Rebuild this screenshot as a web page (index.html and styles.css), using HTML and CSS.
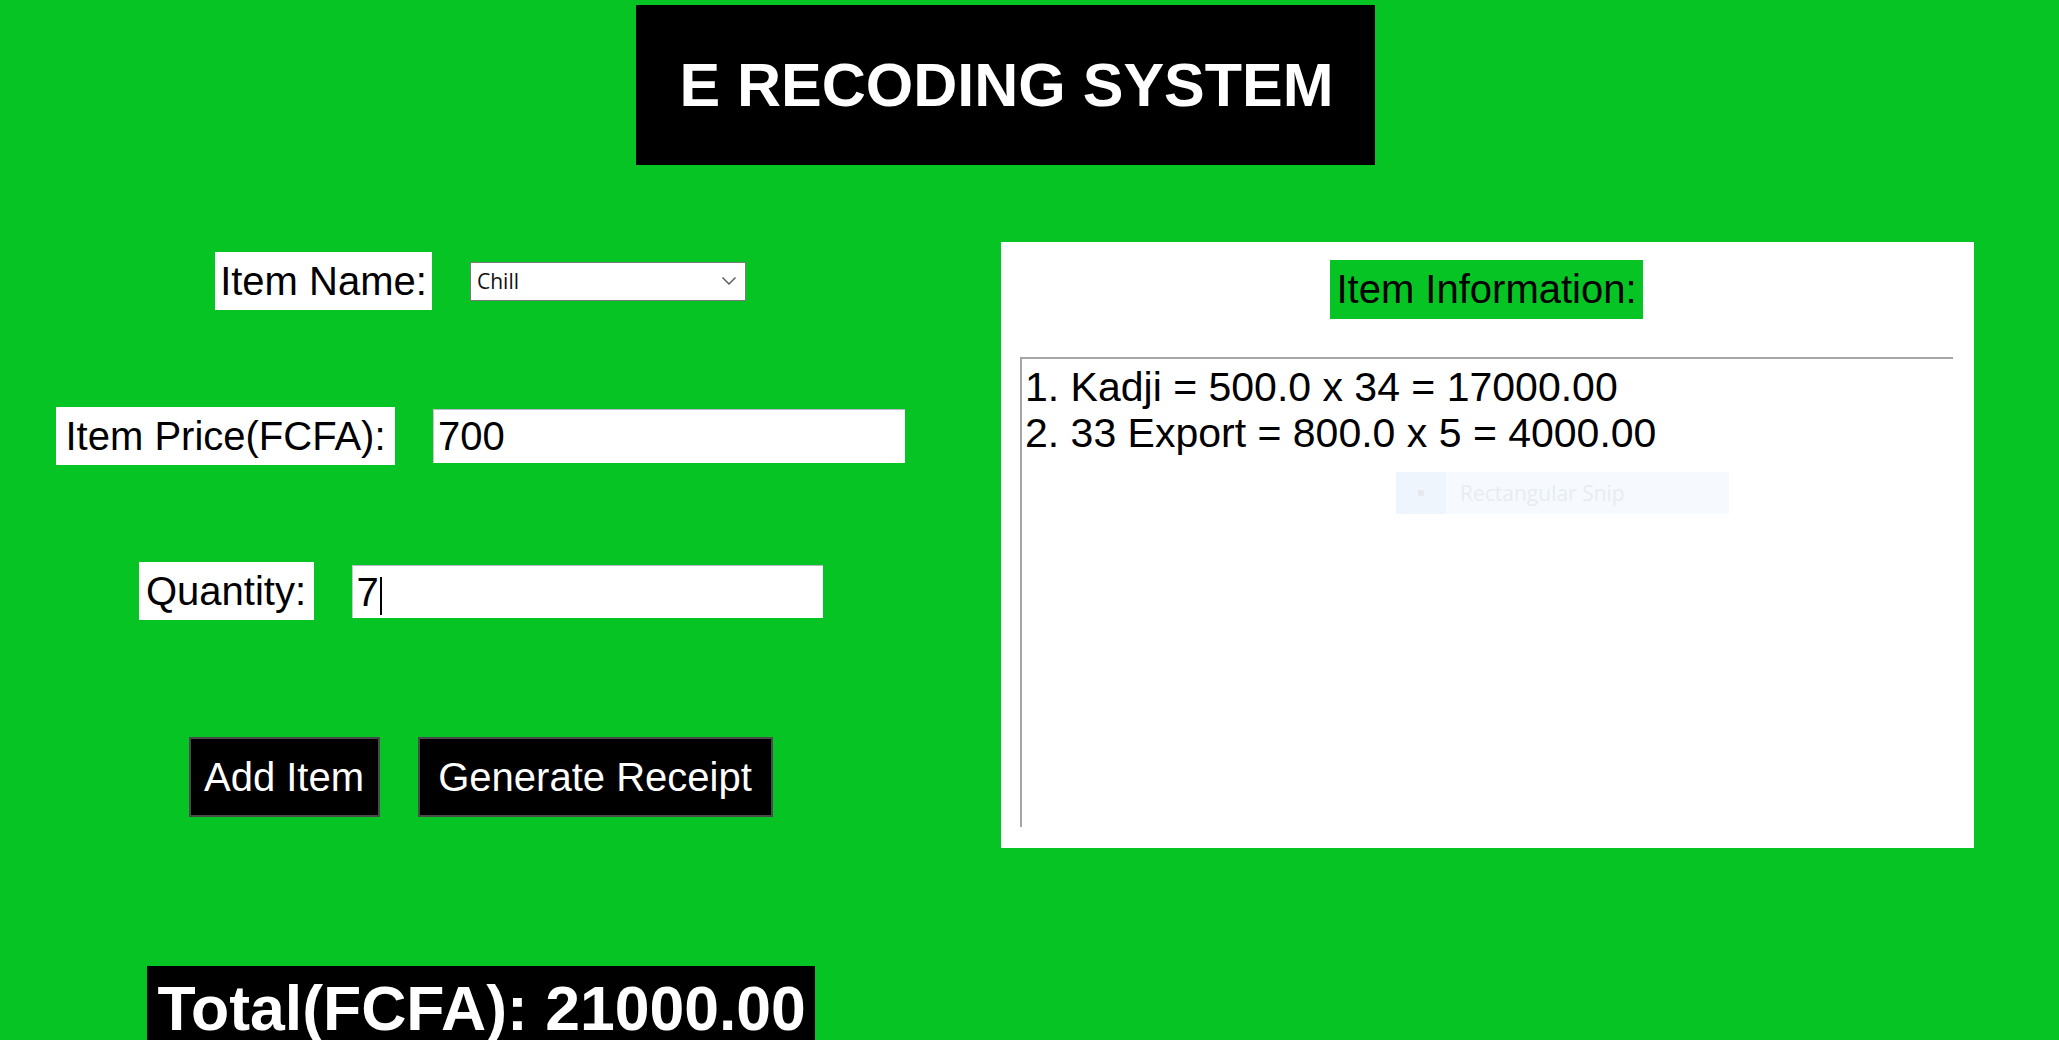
FILE: index.html
```html
<!DOCTYPE html>
<html lang="en">
<head>
<meta charset="utf-8">
<title>E Recoding System</title>
<link rel="stylesheet" href="styles.css">
</head>
<body>
  <header class="top">
    <h1 class="title">E RECODING SYSTEM</h1>
  </header>
  <main class="main">
    <section class="form">
      <div class="row row-name">
        <span class="label label-name">Item Name:</span>
        <div class="combo">
          <span class="combo-text">Chill</span>
          <svg class="chev" width="16" height="10" viewBox="0 0 16 10"><path d="M1.5 1.5 L8 8 L14.5 1.5" fill="none" stroke="#555" stroke-width="1.4"/></svg>
        </div>
      </div>
      <div class="row row-price">
        <span class="label label-price">Item Price(FCFA):</span>
        <div class="entry entry-price">700</div>
      </div>
      <div class="row row-qty">
        <span class="label label-qty">Quantity:</span>
        <div class="entry entry-qty">7<span class="caret"></span></div>
      </div>
      <div class="row row-btns">
        <button class="btn btn-add">Add Item</button>
        <button class="btn btn-gen">Generate Receipt</button>
      </div>
      <div class="total">Total(FCFA): 21000.00</div>
    </section>
    <section class="panel">
      <h2 class="panel-title">Item Information:</h2>
      <div class="listbox">
        <div class="line">1. Kadji = 500.0 x 34 = 17000.00</div>
        <div class="line">2. 33 Export = 800.0 x 5 = 4000.00</div>
        <div class="snip"><span class="snip-icon"><span class="snip-dot"></span></span><span class="snip-text">Rectangular Snip</span></div>
      </div>
    </section>
  </main>
</body>
</html>
```
FILE: styles.css
```css
html, body {
  margin: 0;
  padding: 0;
  height: 1040px;
  overflow: hidden;
}
body {
  background: #06c423;
  font-family: "Liberation Sans", Arial, sans-serif;
  color: #000;
}
.top {
  height: 160px;
  padding-top: 5px;
}
.title {
  margin: 0 0 0 636px;
  width: 739px;
  height: 160px;
  background: #000;
  color: #fff;
  font-size: 61px;
  font-weight: bold;
  display: flex;
  align-items: center;
  justify-content: center;
  box-sizing: border-box;
  padding-left: 2px;
}
.main {
  display: flex;
  align-items: flex-start;
}
.form {
  width: 961px;
  display: flex;
  flex-direction: column;
  align-items: center;
  padding-top: 87px;
}
.row {
  display: flex;
  align-items: center;
  gap: 38px;
}
.row-price { margin-top: 97px; }
.row-qty { margin-top: 97px; }
.row-btns { margin-top: 117px; }
.label {
  background: #fff;
  font-size: 40px;
  height: 58px;
  line-height: 58px;
  box-sizing: border-box;
  text-align: center;
  white-space: nowrap;
}
.label-name { width: 217px; }
.label-price { width: 339px; }
.label-qty { width: 175px; }
.combo {
  width: 276px;
  height: 39px;
  box-sizing: border-box;
  background: #fff;
  border: 1px solid #7a7a7a;
  display: flex;
  align-items: center;
  justify-content: space-between;
  padding: 0 8px 0 6px;
}
.combo-text {
  font-family: "Open Sans", "Noto Sans", sans-serif;
  font-size: 21px;
  color: #111;
}
.entry {
  width: 472px;
  height: 54px;
  box-sizing: border-box;
  background: #fff;
  border-top: 1px solid #b8b8c8;
  border-left: 1px solid #c8c8c8;
  font-size: 40px;
  line-height: 53px;
  padding-left: 4px;
  white-space: nowrap;
}
.entry-qty {
  width: 471px;
  height: 53px;
}
.caret {
  display: inline-block;
  width: 2px;
  height: 38px;
  background: #000;
  vertical-align: -9px;
  margin-left: 1px;
}
.btn {
  height: 80px;
  box-sizing: border-box;
  background: #000;
  color: #fff;
  border: 2px solid #4a4a4a;
  font-family: "Liberation Sans", Arial, sans-serif;
  font-size: 40px;
  padding: 0;
  cursor: pointer;
}
.btn-add { width: 191px; }
.btn-gen { width: 355px; }
.total {
  margin-top: 149px;
  width: 668px;
  height: 100px;
  box-sizing: border-box;
  background: #000;
  color: #fff;
  font-size: 62.5px;
  font-weight: bold;
  padding: 6px 0 0 11px;
  white-space: nowrap;
}
.panel {
  margin: 77px 0 0 40px;
  width: 973px;
  height: 606px;
  box-sizing: border-box;
  background: #fff;
  padding: 18px 21px 21px 19px;
  display: flex;
  flex-direction: column;
  align-items: center;
}
.panel-title {
  margin: 0;
  background: #06c423;
  font-weight: normal;
  font-size: 40px;
  width: 313px;
  height: 59px;
  line-height: 59px;
  text-align: center;
  white-space: nowrap;
}
.listbox {
  position: relative;
  margin-top: 38px;
  align-self: stretch;
  flex: 1;
  border-top: 2px solid #a5a5a5;
  border-left: 2px solid #a5a5a5;
  padding: 5px 0 0 3px;
  font-size: 41px;
  line-height: 46px;
}
.line {
  white-space: nowrap;
}
.snip {
  position: absolute;
  left: 374px;
  top: 113px;
  width: 333px;
  height: 42px;
  background: #f6faff;
  display: flex;
  align-items: center;
}
.snip-icon {
  width: 50px;
  height: 42px;
  background: #eff5fd;
  display: flex;
  align-items: center;
  justify-content: center;
}
.snip-dot {
  width: 6px;
  height: 6px;
  background: #e6e8ee;
  border-radius: 1px;
}
.snip-text {
  margin-left: 14px;
  font-family: "Open Sans", "Noto Sans", sans-serif;
  font-size: 21px;
  line-height: 42px;
  color: #e8ecf1;
}
```
